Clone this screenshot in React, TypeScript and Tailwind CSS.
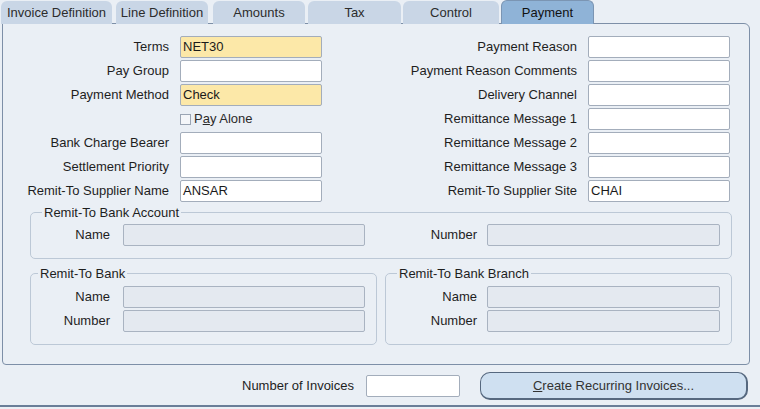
import React from "react";

const tabs = [
  { label: "Invoice Definition", cls: "w-[111px] ml-[1px]" },
  { label: "Line Definition", cls: "w-[92px] ml-[4px]" },
  { label: "Amounts", cls: "w-[92px] ml-[5px]" },
  { label: "Tax", cls: "w-[93px] ml-[3px]" },
  { label: "Control", cls: "w-[96px] ml-[2px]" },
];

const leftRows = [
  { label: "Terms", value: "NET30", req: true },
  { label: "Pay Group", value: "" },
  { label: "Payment Method", value: "Check", req: true },
  { label: "__check", value: "" },
  { label: "Bank Charge Bearer", value: "" },
  { label: "Settlement Priority", value: "" },
  { label: "Remit-To Supplier Name", value: "ANSAR" },
];

const rightRows = [
  { label: "Payment Reason", value: "" },
  { label: "Payment Reason Comments", value: "" },
  { label: "Delivery Channel", value: "" },
  { label: "Remittance Message 1", value: "" },
  { label: "Remittance Message 2", value: "" },
  { label: "Remittance Message 3", value: "" },
  { label: "Remit-To Supplier Site", value: "CHAI" },
];

const Field = ({ value, req }: { value: string; req?: boolean }) => (
  <div
    className={`w-[142px] h-[22px] border border-[#a3adbb] rounded-[2px] px-[2px] leading-[20px] text-[#1a1a1a] ${
      req ? "bg-[#fce8a8]" : "bg-white"
    }`}
  >
    {value}
  </div>
);

const Disabled = ({ w }: { w: string }) => (
  <div className={`${w} h-[22px] border border-[#a9b3c1] rounded-[2px] bg-[#e4e9f0]`} />
);

const Payment = () => {
  return (
    <div
      className="w-[760px] h-[409px] bg-[#eaeff5] text-[13px] text-[#1e1e1e] overflow-hidden"
      style={{ fontFamily: '"Liberation Sans", Arial, sans-serif' }}
    >
      {/* tabs */}
      <div className="flex items-end h-[24px]">
        {tabs.map((t) => (
          <div
            key={t.label}
            className={`${t.cls} h-[23px] bg-[#c9d6e6] rounded-t-[6px] text-center leading-[24px] text-[#2c2c2c] relative z-10`}
          >
            {t.label}
          </div>
        ))}
        <div className="w-[93px] ml-[2px] h-[24px] bg-[#8fb3d7] border border-b-0 border-[#7b95b3] rounded-t-[6px] text-center leading-[24px] text-[#111] relative z-10">
          Payment
        </div>
      </div>

      {/* panel */}
      <div className="ml-[2px] -mt-[1px] w-[748px] h-[342px] border border-[#7d8fa7] rounded-tr-[6px] rounded-b-[4px] pt-[12px]">
        <div className="flex">
          <div className="flex flex-col gap-[2px]">
            {leftRows.map((r) =>
              r.label === "__check" ? (
                <div key="chk" className="flex items-center h-[22px] pl-[177px]">
                  <div className="w-[11px] h-[11px] border border-[#9aa5b4] bg-[#f4f6f9]" />
                  <span className="ml-[3px] text-[#2a2a2a]">
                    P<span className="underline">a</span>y Alone
                  </span>
                </div>
              ) : (
                <div key={r.label} className="flex items-center h-[22px]">
                  <div className="w-[166px] text-right pr-0">{r.label}</div>
                  <div className="ml-[11px]">
                    <Field value={r.value} req={r.req} />
                  </div>
                </div>
              )
            )}
          </div>
          <div className="flex flex-col gap-[2px]">
            {rightRows.map((r) => (
              <div key={r.label} className="flex items-center h-[22px]">
                <div className="w-[255px] text-right">{r.label}</div>
                <div className="ml-[11px]">
                  <Field value={r.value} />
                </div>
              </div>
            ))}
          </div>
        </div>

        {/* Remit-To Bank Account */}
        <fieldset className="ml-[27px] mt-[3px] w-[702px] border border-[#bcc8d6] rounded-[5px] pb-[12px]">
          <legend className="ml-[11px] px-[2px] leading-[15px]">Remit-To Bank Account</legend>
          <div className="flex items-center pt-[4px]">
            <div className="w-[79px] text-right">Name</div>
            <div className="ml-[13px]">
              <Disabled w="w-[242px]" />
            </div>
            <div className="w-[112px] text-right">Number</div>
            <div className="ml-[10px]">
              <Disabled w="w-[233px]" />
            </div>
          </div>
        </fieldset>

        <div className="flex ml-[27px] mt-[7px] gap-[8px]">
          <fieldset className="w-[347px] border border-[#bcc8d6] rounded-[5px] pb-[12px]">
            <legend className="ml-[7px] px-[2px] leading-[15px]">Remit-To Bank</legend>
            <div className="flex flex-col gap-[2px] pt-[5px]">
              <div className="flex items-center">
                <div className="w-[79px] text-right">Name</div>
                <div className="ml-[13px]">
                  <Disabled w="w-[242px]" />
                </div>
              </div>
              <div className="flex items-center">
                <div className="w-[79px] text-right">Number</div>
                <div className="ml-[13px]">
                  <Disabled w="w-[242px]" />
                </div>
              </div>
            </div>
          </fieldset>
          <fieldset className="w-[347px] border border-[#bcc8d6] rounded-[5px] pb-[12px]">
            <legend className="ml-[11px] px-[2px] leading-[15px]">Remit-To Bank Branch</legend>
            <div className="flex flex-col gap-[2px] pt-[5px]">
              <div className="flex items-center">
                <div className="w-[91px] text-right">Name</div>
                <div className="ml-[10px]">
                  <Disabled w="w-[233px]" />
                </div>
              </div>
              <div className="flex items-center">
                <div className="w-[91px] text-right">Number</div>
                <div className="ml-[10px]">
                  <Disabled w="w-[233px]" />
                </div>
              </div>
            </div>
          </fieldset>
        </div>
      </div>

      {/* footer */}
      <div className="flex items-center justify-end pr-[12px] pt-[7px]">
        <span>Number of Invoices</span>
        <div className="ml-[12px] w-[94px] h-[22px] border border-[#a3adbb] rounded-[2px] bg-white" />
        <button className="ml-[20px] w-[268px] h-[28px] rounded-[10px] border border-[#56687f] border-r-2 border-b-2 bg-[#cfe0f1] text-[#333] text-[13px]">
          <span className="underline">C</span>reate Recurring Invoices...
        </button>
      </div>
      <div className="mt-[5px] h-[2px] bg-[#6a7e98]" />
    </div>
  );
};

export default function App() {
  return <Payment />;
}
